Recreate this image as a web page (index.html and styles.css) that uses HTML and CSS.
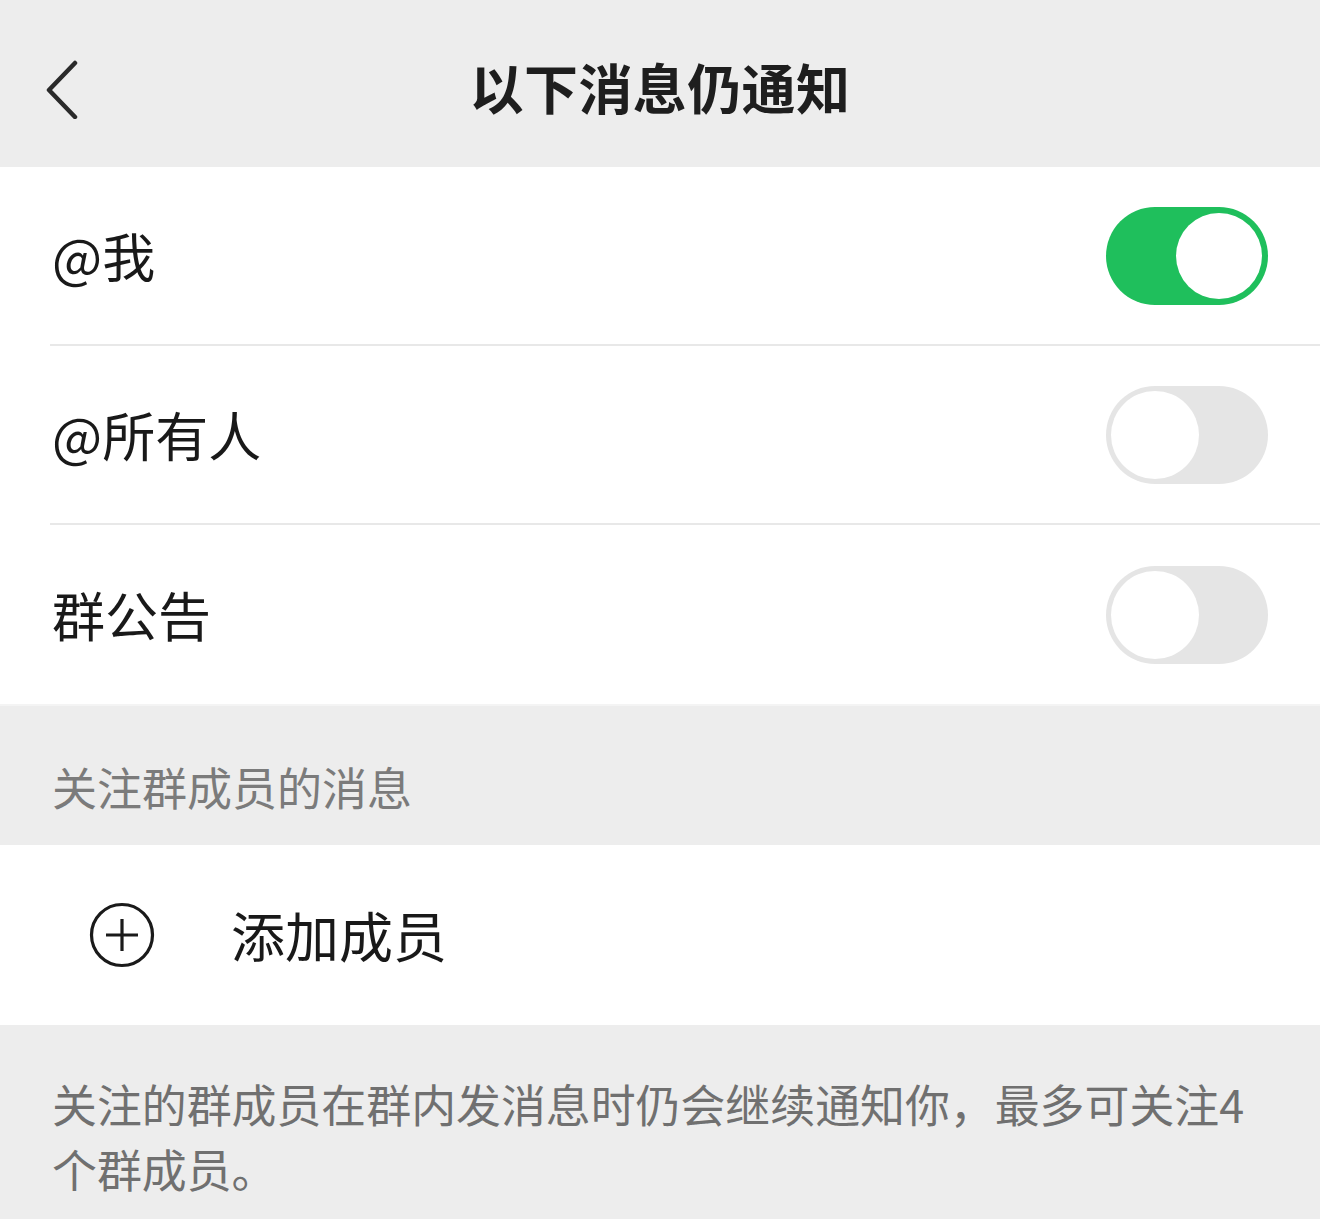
FILE: index.html
```html
<!DOCTYPE html>
<html lang="zh-CN">
<head>
<meta charset="utf-8">
<title>以下消息仍通知</title>
<link rel="stylesheet" href="styles.css">
</head>
<body>
<header class="nav">
  <div class="nav-left">
    <svg class="back" width="40" height="60" viewBox="0 0 40 60"><path d="M31 4 L5 31 L31 58" fill="none" stroke="#2a2a2a" stroke-width="4.5" stroke-linecap="round" stroke-linejoin="round"/></svg>
  </div>
  <h1 class="title">以下消息仍通知</h1>
  <div class="nav-right"></div>
</header>

<section class="list">
  <div class="row">
    <span class="label">@我</span>
    <span class="switch on"></span>
  </div>
  <div class="row">
    <span class="label">@所有人</span>
    <span class="switch"></span>
  </div>
  <div class="row last">
    <span class="label">群公告</span>
    <span class="switch"></span>
  </div>
</section>

<div class="section-title">关注群成员的消息</div>

<section class="add">
  <svg class="plus" width="68" height="68" viewBox="0 0 68 68"><circle cx="34" cy="34" r="30.5" fill="none" stroke="#1a1a1a" stroke-width="3.2"/><path d="M34 18 V50 M18 34 H50" stroke="#1a1a1a" stroke-width="3.2"/></svg>
  <span class="add-label">添加成员</span>
</section>

<p class="note">关注的群成员在群内发消息时仍会继续通知你，最多可关注4个群成员。</p>
</body>
</html>
```

FILE: styles.css
```css
html, body {
  margin: 0;
  padding: 0;
  background: #ededed;
  font-family: "Noto Sans CJK SC", "Noto Sans", sans-serif;
  color: #1a1a1a;
}

.nav {
  height: 167px;
  display: grid;
  grid-template-columns: 1fr auto 1fr;
  align-items: center;
  background: #ededed;
}

.nav-left {
  padding-left: 44px;
  display: flex;
  align-items: center;
  padding-top: 10px;
}

.title {
  margin: 0;
  font-size: 54px;
  font-weight: 700;
  color: #1e1e1e;
  line-height: 1;
  letter-spacing: 0.4px;
  padding-top: 6px;
}

.list {
  background: #fff;
  border-bottom: 2px solid #f4f4f4;
}

.row {
  height: 177px;
  margin-left: 50px;
  padding-left: 2px;
  padding-right: 52px;
  display: flex;
  align-items: center;
  justify-content: space-between;
  border-bottom: 2px solid #e8e8e8;
}

.row.last {
  border-bottom: none;
  height: 179px;
}

.label {
  font-size: 53px;
  line-height: 1;
  color: #191919;
  padding-top: 0;
}

.switch {
  position: relative;
  width: 162px;
  height: 98px;
  border-radius: 49px;
  background: #e5e5e5;
  flex: none;
}

.switch::after {
  content: "";
  position: absolute;
  left: 5px;
  top: 5px;
  width: 88px;
  height: 88px;
  border-radius: 50%;
  background: #fff;
}

.switch.on {
  background: #1fbf5c;
}

.switch.on::after {
  left: auto;
  right: 6px;
  top: 6px;
  width: 86px;
  height: 86px;
}

.section-title {
  height: 139px;
  box-sizing: border-box;
  padding: 0 52px 28px;
  display: flex;
  align-items: flex-end;
  font-size: 45px;
  line-height: 60px;
  color: #7b7b7b;
}

.add {
  height: 180px;
  background: #fff;
  display: flex;
  align-items: center;
  padding-left: 88px;
}

.plus {
  flex: none;
}

.add-label {
  margin-left: 75px;
  font-size: 54px;
  line-height: 1;
  color: #191919;
  padding-top: 0;
}

.note {
  margin: 0;
  padding: 46px 52px 0;
  font-size: 44.9px;
  line-height: 65px;
  color: #707070;
  width: 1210px;
  box-sizing: content-box;
}
```
